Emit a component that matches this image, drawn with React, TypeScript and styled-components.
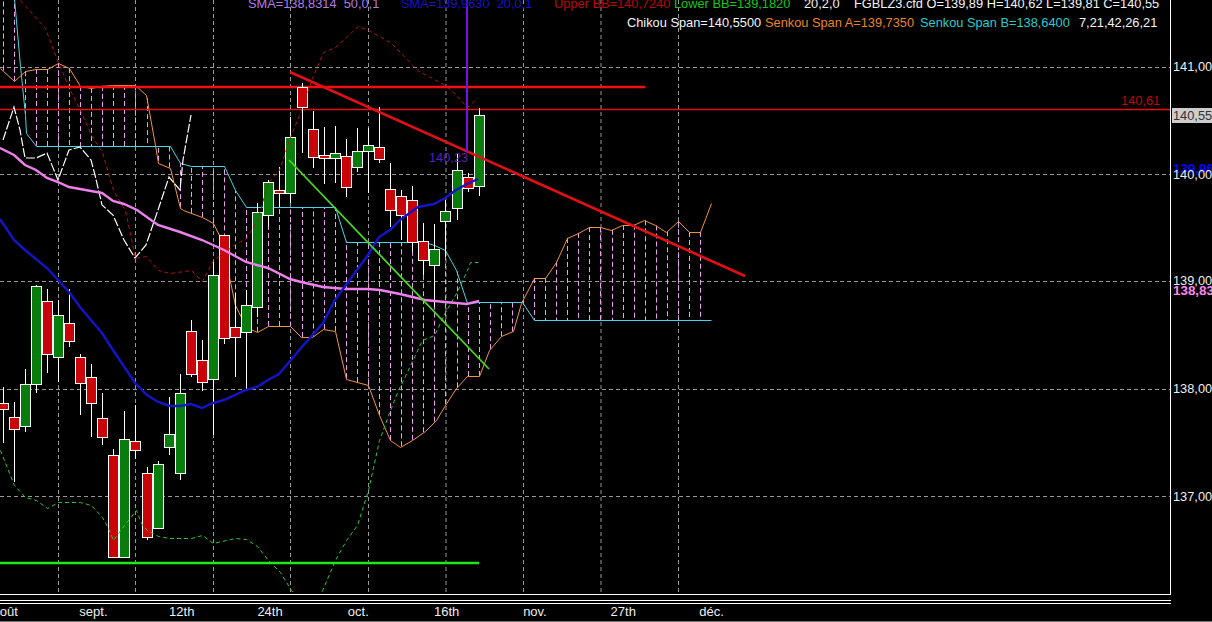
import styled, {createGlobalStyle} from 'styled-components';

const GlobalStyle = createGlobalStyle`
   html, body {
      margin: 0;
      padding: 0;
      background: #000;
   }
`;

const Page = styled.div`
   width: 1212px;
   height: 622px;
   display: flex;
   flex-direction: column;
   overflow: hidden;
   background: #000;
   color: #eee;
   font-family: 'Liberation Sans', Arial, sans-serif;
   font-size: 12.8px;
   line-height: 14px;
`;
const ChartRow = styled.div`
   display: flex;
   height: 595px;
   flex: none;
`;
const Plot = styled.div`
   position: relative;
   flex: none;
   width: 1170px;
   height: 594px;
   border-bottom: 1px solid #fff;
   overflow: hidden;
   svg {
      display: block;
   }
`;
const PriceAxis = styled.div`
   position: relative;
   flex: 1 1 auto;
   border-left: 1px solid #fff;
   overflow: hidden;
`;
const PriceTick = styled.span<{$y: number}>`
   position: absolute;
   left: 2px;
   top: ${props => props.$y - 7}px;
   white-space: nowrap;
`;
const SmaTick = styled(PriceTick)<{$color: string}>`
   font-weight: 700;
   font-size: 13.4px;
   color: ${props => props.$color};
`;
const LastTick = styled(PriceTick)`
   left: 1px;
   padding: 0 2px 0 1px;
   height: 15px;
   line-height: 15px;
   background: #ccc;
   color: #333;
`;
const AxisRules = styled.div`
   flex: none;
   width: 1171px;
   height: 4px;
   margin-top: 5px;
   border-top: 1px solid #fff;
   border-bottom: 1px solid #fff;
   box-sizing: border-box;
`;
const DateAxis = styled.div`
   flex: 1 1 auto;
   display: grid;
   grid-template-columns: repeat(9, 88.3px);
   margin-left: -39px;
   padding-top: 1px;
   border-bottom: 1px solid #777;
   font-size: 13px;
   text-align: center;
   white-space: nowrap;
`;
const LegendBlock = styled.div`
   position: absolute;
   top: -3px;
   left: 0;
   right: 0;
   display: flex;
   flex-direction: column;
   gap: 5px;
`;
const LegendRow = styled.div<{$start: number; $columns: string}>`
   display: grid;
   grid-template-columns: ${props => props.$columns};
   padding-left: ${props => props.$start}px;
   white-space: pre;
`;
const LegendItem = styled.span<{$color: string}>`
   color: ${props => props.$color};
`;
const LevelLabel = styled.span<{$x: number; $y: number; $color: string}>`
   position: absolute;
   left: ${props => props.$x}px;
   top: ${props => props.$y}px;
   color: ${props => props.$color};
`;

const COLORS = {
   sma50: '#ee80ee',
   sma20: '#1414c8',
   upper: '#b01414',
   lower: '#28c83c',
   chikou: '#ffffff',
   spanA: '#f09440',
   spanB: '#48d4e4',
   cloud: '#ee9cee',
   grid: '#969696',
   up: '#087c0c',
   down: '#c80408',
   trend: '#e01014',
};

type Pt = [number, number];

const barX = (i: number) => 2.65 + i * 11.07;

// index, wick top, body top, body bottom, wick bottom, up?
const candles: [number, number, number, number, number, boolean][] = [
   [0, 387, 403, 409, 443, false],
   [1, 402, 417, 429, 482, false],
   [2, 369, 384, 426, 432, true],
   [3, 285, 286, 384, 393, true],
   [4, 289, 301, 354, 373, false],
   [5, 300, 315, 357, 382, true],
   [6, 289, 323, 341, 347, false],
   [7, 354, 357, 383, 415, false],
   [8, 364, 377, 403, 437, false],
   [9, 393, 418, 437, 445, false],
   [10, 449, 455, 557, 557, false],
   [11, 411, 439, 557, 557, true],
   [12, 405, 441, 450, 459, false],
   [13, 467, 473, 537, 540, false],
   [14, 461, 464, 528, 528, true],
   [15, 397, 434, 447, 455, true],
   [16, 374, 393, 473, 480, true],
   [17, 320, 331, 374, 377, false],
   [18, 340, 360, 382, 391, false],
   [19, 260, 275, 379, 435, true],
   [20, 235, 235, 338, 344, false],
   [21, 293, 327, 337, 377, false],
   [22, 290, 305, 332, 389, true],
   [23, 203, 212, 307, 317, true],
   [24, 180, 182, 215, 227, true],
   [25, 167, 190, 193, 207, false],
   [26, 117, 137, 193, 203, true],
   [27, 83, 87, 107, 153, false],
   [28, 111, 129, 157, 168, false],
   [29, 127, 155, 158, 184, false],
   [30, 126, 153, 158, 183, true],
   [31, 139, 156, 187, 197, false],
   [32, 128, 151, 167, 172, true],
   [33, 128, 145, 151, 193, true],
   [34, 107, 147, 159, 163, false],
   [35, 163, 189, 210, 227, false],
   [36, 190, 196, 215, 240, false],
   [37, 186, 200, 242, 252, false],
   [38, 223, 241, 260, 275, false],
   [39, 224, 249, 265, 307, true],
   [40, 200, 211, 221, 257, true],
   [41, 153, 170, 208, 220, true],
   [42, 173, 177, 188, 192, false],
   [43, 108, 115, 186, 196, true],
];

const spanA: Pt[] = [
   [0, 68], [14, 81], [25, 71], [36, 69], [47, 69], [58, 63], [69, 68], [80, 86], [91, 88], [100, 86],
   [112, 85], [135, 85], [146, 95], [155, 145], [158, 163], [170, 168], [180, 208], [183, 210], [202, 217],
   [213, 223], [219, 235], [225, 258], [235, 305], [246, 327], [257, 332], [268, 326], [290, 326],
   [301, 337], [312, 337], [323, 329], [335, 331], [346, 379], [368, 385], [379, 415], [390, 440],
   [400, 447], [412, 440], [425, 431], [436, 420], [445, 405], [456, 388], [467, 376], [479, 376],
   [489, 350], [501, 336], [513, 331], [521, 303], [534, 278], [545, 278], [556, 262], [567, 238],
   [578, 233], [589, 227], [600, 227], [611, 230], [622, 225], [633, 225], [644, 220], [655, 225],
   [666, 232], [678, 221], [689, 232], [700, 232], [711, 203],
];
const spanB: Pt[] = [
   [14, -2], [20, 66], [25, 115], [26, 133], [36, 146], [170, 146], [180, 163], [191, 166], [224, 166],
   [235, 190], [246, 207], [335, 207], [346, 242], [425, 242], [434, 245], [445, 250], [456, 270],
   [467, 303], [479, 302], [522, 302], [534, 320], [711, 320],
];
const chikou: Pt[] = [
   [3, 140], [14, 107], [20, 130], [25, 158], [36, 158], [47, 153], [58, 180], [69, 150], [80, 147],
   [91, 160], [95, 175], [102, 205], [113, 215], [124, 240], [135, 258], [146, 245], [158, 210],
   [169, 177], [180, 190], [183, 160], [191, 115],
];
const upperBand: Pt[] = [
   [20, 0], [45, 28], [55, 55], [70, 90], [80, 110], [91, 135], [102, 152], [113, 190], [125, 210],
   [135, 258], [146, 256], [158, 270], [170, 273], [191, 270], [202, 281], [213, 260], [235, 244],
   [246, 238], [257, 220], [268, 182], [279, 170], [290, 137], [301, 110], [312, 78], [323, 52],
   [335, 47], [346, 37], [358, 26], [368, 30], [379, 36], [390, 42], [400, 52], [417, 70], [445, 85],
   [456, 95], [467, 107], [477, 98],
];
const lowerBand: Pt[] = [
   [0, 450], [14, 485], [25, 497], [36, 500], [47, 508], [58, 502], [69, 502], [80, 502], [91, 505],
   [102, 517], [108, 528], [113, 540], [124, 525], [136, 510], [142, 525], [147, 530], [158, 536],
   [169, 538], [191, 538], [202, 535], [213, 543], [235, 538], [246, 539], [257, 546], [268, 560],
   [280, 572], [291, 590], [300, 600], [316, 600], [320, 595], [335, 560], [346, 540], [357, 525],
   [368, 490], [379, 440], [390, 410], [398, 390], [403, 380], [422, 340], [434, 335], [445, 312],
   [456, 293], [467, 270], [470, 262], [478, 262],
];
const sma50: Pt[] = [
   [0, 148], [14, 155], [25, 165], [36, 170], [47, 178], [58, 182], [69, 187], [80, 189], [91, 191],
   [102, 193], [113, 201], [124, 204], [137, 210], [158, 225], [180, 232], [202, 240], [224, 250],
   [246, 262], [268, 268], [290, 279], [301, 282], [323, 287], [346, 289], [368, 289], [380, 290],
   [400, 294], [425, 300], [445, 302], [467, 304], [479, 301],
];
const sma20: Pt[] = [
   [0, 219], [14, 240], [25, 250], [47, 268], [58, 280], [69, 292], [80, 307], [102, 333], [113, 350],
   [135, 383], [147, 395], [158, 402], [170, 406], [180, 406], [191, 404], [202, 408], [213, 403],
   [224, 400], [246, 390], [257, 387], [268, 380], [279, 374], [290, 361], [301, 348], [323, 323],
   [335, 300], [346, 285], [368, 255], [379, 237], [390, 230], [400, 220], [418, 207], [434, 204],
   [445, 198], [456, 190], [467, 184], [478, 179],
];

const gridY = [67, 174, 281, 389, 496];
const gridX = [58, 135, 213, 290, 368, 445.5, 523, 600.5, 678];

const toPoints = (pts: Pt[]) => pts.map(p => p.join(',')).join(' ');

const yAt = (pts: Pt[], x: number) => {
   for (let i = 0; i < pts.length - 1; i++) {
      const [x0, y0] = pts[i];
      const [x1, y1] = pts[i + 1];
      if (x >= x0 && x <= x1) {
         return y0 + ((y1 - y0) * (x - x0)) / (x1 - x0 || 1);
      }
   }
   return x < pts[0][0] ? pts[0][1] : null;
};

const cloudBars = Array.from({length: 65}, (_, i) => {
   const x = barX(i);
   const a = yAt(spanA, x);
   const b = yAt(spanB, x);
   return a === null || b === null ? null : {x, a, b};
}).filter(Boolean) as {x: number; a: number; b: number}[];

const ChartDrawing = () => (
   <svg width={1170} height={594} viewBox='0 0 1170 594'>
      {gridY.map(y => (
         <line key={y} x1={0} x2={1170} y1={y + 0.5} y2={y + 0.5} stroke={COLORS.grid} strokeDasharray='4 3' />
      ))}
      {gridX.map(x => (
         <line key={x} x1={x + 0.5} x2={x + 0.5} y1={0} y2={592} stroke={COLORS.grid} strokeDasharray='4 3' />
      ))}
      {cloudBars.map(({x, a, b}) => (
         <line key={x} x1={Math.round(x) + 0.5} x2={Math.round(x) + 0.5} y1={a} y2={b} stroke={COLORS.cloud} strokeDasharray='5 3' />
      ))}
      <g transform='translate(0.5 0.5)'>
         <polyline points={toPoints(spanB)} fill='none' stroke={COLORS.spanB} />
         <polyline points={toPoints(spanA)} fill='none' stroke={COLORS.spanA} />
      </g>
      <line x1={0} x2={645} y1={87} y2={87} stroke='#f01014' strokeWidth={2.4} />
      <line x1={0} x2={1170} y1={109.5} y2={109.5} stroke='#e01018' strokeWidth={1.5} />
      <polyline points={toPoints(chikou)} fill='none' stroke={COLORS.chikou} strokeWidth={1.2} strokeDasharray='9 2' />
      {candles.map(([i, wickTop, top, bottom, wickBottom, up]) => {
         const x = Math.round(barX(i));
         return (
            <g key={i}>
               <line x1={x + 0.5} x2={x + 0.5} y1={wickTop} y2={wickBottom} stroke='#fff' />
               <rect
                  x={x - 5 + 0.5}
                  y={top + 0.5}
                  width={10}
                  height={bottom - top}
                  fill={up ? COLORS.up : COLORS.down}
                  stroke='#fff'
               />
            </g>
         );
      })}
      <g transform='translate(0.5 0.5)'>
         <polyline points={toPoints(upperBand)} fill='none' stroke={COLORS.upper} strokeDasharray='4 3' />
         <polyline points={toPoints(lowerBand)} fill='none' stroke={COLORS.lower} strokeDasharray='4 3' />
      </g>
      <polyline points={toPoints(sma50)} fill='none' stroke={COLORS.sma50} strokeWidth={2.4} />
      <polyline points={toPoints(sma20)} fill='none' stroke={COLORS.sma20} strokeWidth={2.4} />
      <line x1={0} x2={479} y1={563} y2={563} stroke='#1ee81e' strokeWidth={2.4} />
      <line x1={289} y1={160} x2={489} y2={369} stroke='#48d820' strokeWidth={1.8} />
      <line x1={290} y1={72} x2={745} y2={276} stroke={COLORS.trend} strokeWidth={2.6} />
      <line x1={467} y1={0} x2={467} y2={152} stroke='#7a10e0' strokeWidth={2} />
   </svg>
);

const legendRows: {start: number; columns: string; items: [string, string][]}[] = [
   {
      start: 248,
      columns: '153px 153px 120px 130px 50px auto',
      items: [
         ['#b07ce8', 'SMA=138,8314  50,0,1'],
         [COLORS.sma20, 'SMA=139,9630  20,0,1'],
         ['#c00408', 'Upper BB=140,7240'],
         ['#14c814', 'Lower BB=139,1820'],
         ['#f4f4f4', '20,2,0'],
         ['#f4f4f4', 'FGBLZ3.cfd O=139,89 H=140,62 L=139,81 C=140,55'],
      ],
   },
   {
      start: 627,
      columns: '138px 155px 159px auto',
      items: [
         ['#f4f4f4', 'Chikou Span=140,5500'],
         ['#e88428', 'Senkou Span A=139,7350'],
         ['#28cccc', 'Senkou Span B=138,6400'],
         ['#f4f4f4', '7,21,42,26,21'],
      ],
   },
];

const priceTicks: [string, number][] = [
   ['141,00', 67],
   ['140,00', 175],
   ['139,00', 281],
   ['138,00', 389],
   ['137,00', 497],
];

const dateTicks = ['août', 'sept.', '12th', '24th', 'oct.', '16th', 'nov.', '27th', 'déc.'];

const App = () => (
   <>
      <GlobalStyle />
      <Page>
         <ChartRow>
            <Plot>
               <ChartDrawing />
               <LegendBlock>
                  {legendRows.map(row => (
                     <LegendRow key={row.start} $start={row.start} $columns={row.columns}>
                        {row.items.map(([color, text]) => (
                           <LegendItem key={text} $color={color}>
                              {text}
                           </LegendItem>
                        ))}
                     </LegendRow>
                  ))}
               </LegendBlock>
               <LevelLabel $x={1121} $y={94} $color='#c00408'>
                  140,61
               </LevelLabel>
               <LevelLabel $x={429} $y={151} $color='#5a20b0'>
                  140,23
               </LevelLabel>
            </Plot>
            <PriceAxis>
               <SmaTick $y={169} $color='#0808f0'>
                  139,96
               </SmaTick>
               <SmaTick $y={291} $color='#ff88ee'>
                  138,83
               </SmaTick>
               {priceTicks.map(([label, y]) => (
                  <PriceTick key={label} $y={y}>
                     {label}
                  </PriceTick>
               ))}
               <LastTick $y={115}>140,55</LastTick>
            </PriceAxis>
         </ChartRow>
         <AxisRules />
         <DateAxis>
            {dateTicks.map(label => (
               <span key={label}>{label}</span>
            ))}
         </DateAxis>
      </Page>
   </>
);
export default App;
